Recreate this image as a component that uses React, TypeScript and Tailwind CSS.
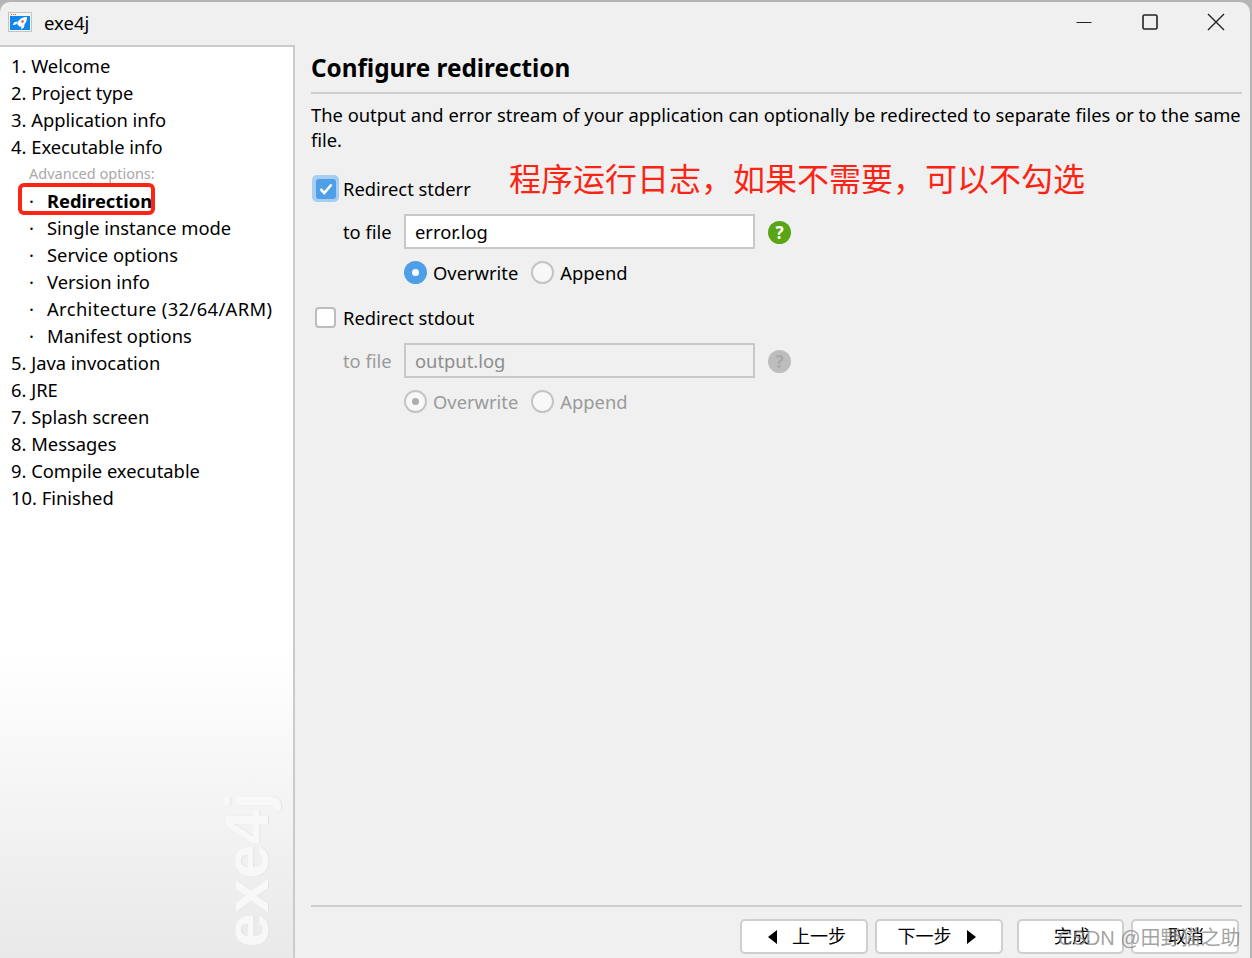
import React from "react";

const font = "font-['Noto_Sans','Noto_Sans_CJK_SC',sans-serif]";

const steps = ["1. Welcome", "2. Project type", "3. Application info", "4. Executable info"];
const subSteps = ["Single instance mode", "Service options", "Version info", "Architecture (32/64/ARM)", "Manifest options"];
const laterSteps = ["5. Java invocation", "6. JRE", "7. Splash screen", "8. Messages", "9. Compile executable", "10. Finished"];

const Radio = ({ on, disabled, label }: { on?: boolean; disabled?: boolean; label: string }) => (
  <div className={`flex items-center gap-[6px] ${disabled ? "text-[#9a9a9a]" : "text-black"}`}>
    {on && !disabled ? (
      <span className="w-[23px] h-[23px] rounded-full bg-[#4f9ee8] flex items-center justify-center">
        <span className="w-[7px] h-[7px] rounded-full bg-white" />
      </span>
    ) : (
      <span className="w-[23px] h-[23px] rounded-full border-2 border-[#c4c4c4] bg-[#f8f8f8] flex items-center justify-center">
        {on && <span className="w-[7px] h-[7px] rounded-full bg-[#adadad]" />}
      </span>
    )}
    <span>{label}</span>
  </div>
);

const HelpIcon = ({ disabled }: { disabled?: boolean }) => (
  <span
    className={`w-[23px] h-[23px] rounded-full flex items-center justify-center text-[17px] font-bold leading-none ${
      disabled ? "bg-[#bdbdbd] text-[#a9a9a9]" : "bg-[#5aa514] text-white"
    }`}
  >
    ?
  </span>
);

const FileRow = ({ value, disabled }: { value: string; disabled?: boolean }) => (
  <div className="flex items-center h-[35px] pl-[32px]">
    <span className={`w-[61px] pb-[1px] ${disabled ? "text-[#9a9a9a]" : "text-black"}`}>to file</span>
    <div
      className={`w-[351px] h-[35px] border-2 border-[#c8c8c8] pl-[9px] pb-[1px] flex items-center ${
        disabled ? "bg-[#f0f0f0] text-[#8e8e8e]" : "bg-white text-black"
      }`}
    >
      {value}
    </div>
    <span className="ml-[13px] mt-[1px]">
      <HelpIcon disabled={disabled} />
    </span>
  </div>
);

const NavButton = ({ className, children }: { className: string; children: React.ReactNode }) => (
  <div
    className={`h-[35px] bg-white border-2 border-[#cfcfcf] rounded-[5px] flex items-center justify-center text-[18px] text-black ${className}`}
  >
    {children}
  </div>
);

export default function App() {
  return (
    <div className={`relative w-[1252px] h-[958px] overflow-hidden bg-[#b5b5b5] text-[18.35px] leading-[27px] ${font}`}>
      <div className="w-[1250px] h-[956px] mt-[2px] rounded-t-[10px] bg-[#f0f0f0] flex flex-col overflow-hidden">
        {/* Title bar */}
        <div className="h-[43px] shrink-0 flex items-center pb-[3px]">
          <svg className="ml-[8px]" width="24" height="20" viewBox="0 0 24 20">
            <rect x="0.5" y="0.5" width="23" height="19" fill="#f4f4f4" stroke="#c4c4c4" />
            <rect x="2" y="4" width="20" height="14" fill="#1187ee" />
            <path d="M3 2.5h1M5 2.5h1M7 2.5h1" stroke="#e8562c" strokeWidth="1" />
            <path d="M19 5c-5 0-8.500 2.500-10 7l3 3c4.500-1.500 7-5 7-10z" fill="#fff" />
            <path d="M10 9.500l-3.500 .5-2 3 3.500-.5zM13.500 14l-.5 3.500 3-2 .5-3.500z" fill="#fff" />
            <circle cx="14.500" cy="9.500" r="1.300" fill="#e8562c" />
          </svg>
          <span className="ml-[12px] text-[18.5px]">exe4j</span>
          <div className="ml-auto flex items-center">
            <svg width="16" height="16" viewBox="0 0 16 16" className="mr-[50px]">
              <path d="M0.500 8.500h15" stroke="#222" strokeWidth="1" />
            </svg>
            <svg width="16" height="16" viewBox="0 0 16 16" className="mr-[49px]">
              <rect x="1" y="1" width="14" height="14" rx="1.500" fill="none" stroke="#222" strokeWidth="1.600" />
            </svg>
            <svg width="18" height="18" viewBox="0 0 18 18" className="mr-[25px]">
              <path d="M1 1l16 16M17 1L1 17" stroke="#222" strokeWidth="1.400" />
            </svg>
          </div>
        </div>

        <div className="flex flex-1 min-h-0">
          {/* Steps sidebar */}
          <aside className="relative w-[295px] shrink-0 border-t-2 border-r-2 border-[#cbcbcb] bg-gradient-to-b from-white from-[66%] to-[#e9e9e9] pt-[5px] pl-[11px]">
            {steps.map((s) => (
              <div key={s} className="h-[27px]">{s}</div>
            ))}
            <div className="h-[27px] pl-[18px] text-[14.500px] text-[#a8a8a8]">Advanced options:</div>
            <div className="h-[27px] flex">
              <span className="w-[36px] pl-[18px]">·</span>
              <span className="font-bold">Redirection</span>
            </div>
            {subSteps.map((s) => (
              <div key={s} className="h-[27px] flex">
                <span className="w-[36px] pl-[18px]">·</span>
                <span className={s.startsWith("Architecture") ? "tracking-[0.38px]" : ""}>{s}</span>
              </div>
            ))}
            {laterSteps.map((s) => (
              <div key={s} className="h-[27px]">{s}</div>
            ))}
            <div className="absolute left-[18px] top-[136px] w-[137px] h-[32px] border-[4px] border-[#fb2415] rounded-[6px]" />
            <span className="absolute left-[247px] top-[823px] -translate-x-1/2 -translate-y-1/2 -rotate-90 whitespace-nowrap font-['Liberation_Sans',sans-serif] font-bold text-[62px] leading-none text-[#f8f8f8] [text-shadow:0_1px_1px_#e2e2e2]">
              exe4j
            </span>
          </aside>

          {/* Main panel */}
          <main className="flex-1 min-w-0 flex flex-col pl-[16px] pr-[8px]">
            <h1 className="mt-[6px] text-[24.3px] leading-[34px] font-bold text-black">Configure redirection</h1>
            <div className="mt-[7px] h-[2px] bg-[#cfcfcf]" />
            <p className="mt-[8px] leading-[25px] text-black whitespace-nowrap">
              The output and error stream of your application can optionally be redirected to separate files or to the same
              <br />
              file.
            </p>

            <div className="mt-[23px] relative flex items-center h-[27px]">
              <span className="ml-[1px] w-[27px] h-[27px] rounded-[5px] bg-[#a6cdf2] flex items-center justify-center">
                <span className="w-[20px] h-[20px] rounded-[3px] bg-[#4f9ee8] flex items-center justify-center">
                  <svg width="16" height="16" viewBox="0 0 16 16">
                    <path d="M2.500 8l3.800 4L13.500 3.500" fill="none" stroke="#fff" strokeWidth="2.600" />
                  </svg>
                </span>
              </span>
              <span className="ml-[4px]">Redirect stderr</span>
              <span className="absolute left-[198px] top-[-20px] text-[32px] leading-[44px] text-[#fb2415] whitespace-nowrap font-['Noto_Sans_CJK_SC',sans-serif]">
                程序运行日志，如果不需要，可以不勾选
              </span>
            </div>
            <div className="mt-[12px]">
              <FileRow value="error.log" />
            </div>
            <div className="mt-[10px] ml-[93px] flex gap-[13px]">
              <Radio on label="Overwrite" />
              <Radio label="Append" />
            </div>

            <div className="mt-[18px] flex items-center h-[27px]">
              <span className="ml-[4px] w-[21px] h-[21px] rounded-[4px] border-2 border-[#bdbdbd] bg-white" />
              <span className="ml-[7px]">Redirect stdout</span>
            </div>
            <div className="mt-[12px]">
              <FileRow value="output.log" disabled />
            </div>
            <div className="mt-[10px] ml-[93px] flex gap-[13px]">
              <Radio on disabled label="Overwrite" />
              <Radio disabled label="Append" />
            </div>

            {/* Footer buttons */}
            <div className="mt-auto h-[2px] bg-[#cfcfcf]" />
            <div className="mt-[12px] mb-[4px] flex items-center">
              <NavButton className="ml-[429px] w-[128px] gap-[15px] pl-[6px]">
                <span className="w-0 h-0 border-y-[7px] border-y-transparent border-r-[9px] border-r-black" />
                上一步
              </NavButton>
              <NavButton className="ml-[7px] w-[128px] gap-[15px] pr-[5px]">
                下一步
                <span className="w-0 h-0 border-y-[7px] border-y-transparent border-l-[9px] border-l-black" />
              </NavButton>
              <NavButton className="ml-[14px] w-[107px] pl-[3px]">完成</NavButton>
              <NavButton className="ml-[7px] w-[108px] pl-[2px]">取消</NavButton>
            </div>
          </main>
        </div>
      </div>

      {/* CSDN watermark */}
      <span className="absolute left-[1058px] top-[925px] font-['Liberation_Sans','Noto_Sans_CJK_SC',sans-serif] text-[20px] leading-[27px] text-[#8a8a8a]/80 whitespace-nowrap">
        CSDN @田野猫之助
      </span>
    </div>
  );
}
